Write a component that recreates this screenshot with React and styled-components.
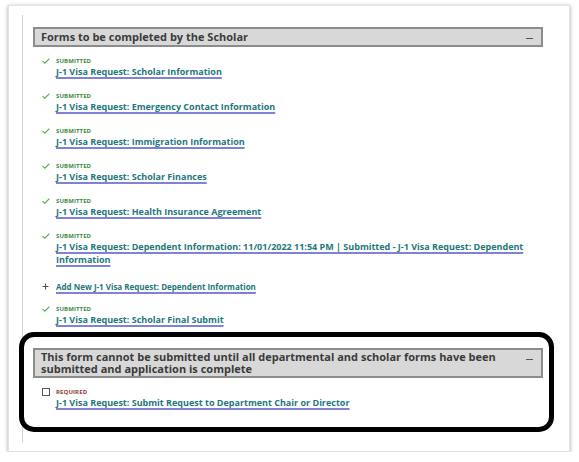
import React from 'react';
import styled, { createGlobalStyle } from 'styled-components';

const GlobalStyle = createGlobalStyle`
  body {
    margin: 0;
    background: #ffffff;
    font-family: "Open Sans", "Noto Sans", sans-serif;
  }
`;

const Card = styled.div`
  box-sizing: border-box;
  width: 562px;
  height: 447px;
  margin: 5px 0 0 8px;
  padding: 9px 0 9px 13px;
  background: #fff;
  border: 1px solid #e2e2e2;
  box-shadow: 0 1px 4px rgba(0, 0, 0, 0.35);
`;

const Inner = styled.div`
  height: 100%;
  box-sizing: border-box;
  border-left: 1px solid #d0d0d0;
  padding: 12px 0 0 10px;
`;

const SectionHeader = styled.div`
  box-sizing: border-box;
  width: 510px;
  min-height: 20px;
  display: flex;
  align-items: flex-start;
  justify-content: space-between;
  padding: 1px 8px 1px 6px;
  background: #d8d8d8;
  border: 2px solid #8c8c8c;
  color: #3b3b3b;
  font-size: 11px;
  font-weight: 700;
  line-height: ${p => (p.$tall ? '12px' : '14px')};
`;

const Collapse = styled.span`
  flex: none;
  width: 7px;
  height: 1px;
  margin-top: 8px;
  margin-left: 12px;
  background: #555;
`;

const List = styled.div`
  padding: 10px 0 0 9px;
`;

const Item = styled.div`
  display: grid;
  grid-template-columns: 14px 1fr;
  align-items: start;
  margin-bottom: ${p => p.$gap ?? 14}px;
`;

const Marker = styled.div`
  display: flex;
  padding-top: ${p => p.$top ?? 1}px;
`;

const Status = styled.div`
  font-size: 6px;
  line-height: 8px;
  font-weight: 700;
  letter-spacing: 0.1px;
  color: ${p => (p.$required ? '#8e3a3a' : '#3e8a3e')};
`;

const LinkLine = styled.div`
  max-width: 480px;
  font-size: ${p => (p.$small ? 8 : 9)}px;
  line-height: 13px;
  font-weight: 700;
`;

const FormLink = styled.a`
  color: #24777c;
  text-decoration: underline;
  text-decoration-color: #8282d2;
  text-decoration-thickness: 1.5px;
  text-underline-offset: 2px;
`;

const Highlight = styled.div`
  box-sizing: border-box;
  width: 535px;
  height: 100px;
  margin: 6px 0 0 -14px;
  padding: 11px 6px 0 9px;
  border: 5px solid #000;
  border-radius: 15px;
`;

const Box = styled.span`
  display: block;
  box-sizing: border-box;
  width: 8px;
  height: 8px;
  border: 1px solid #555;
  background: #fff;
`;

const Check = () => (
  <svg width="8" height="6" viewBox="0 0 8 6">
    <path d="M0.6 3.2 L2.8 5.2 L7.4 0.6" fill="none" stroke="#5aa85a" strokeWidth="1.1" />
  </svg>
);

const Plus = () => (
  <svg width="7" height="7" viewBox="0 0 7 7">
    <path d="M3.5 0.5 V6.5 M0.5 3.5 H6.5" stroke="#555" strokeWidth="1.1" />
  </svg>
);

const scholarForms = [
  'J-1 Visa Request: Scholar Information',
  'J-1 Visa Request: Emergency Contact Information',
  'J-1 Visa Request: Immigration Information',
  'J-1 Visa Request: Scholar Finances',
  'J-1 Visa Request: Health Insurance Agreement',
  'J-1 Visa Request: Dependent Information: 11/01/2022 11:54 PM | Submitted - J-1 Visa Request: Dependent Information',
];

function SubmittedItem({ title, gap }) {
  return (
    <Item $gap={gap}>
      <Marker><Check /></Marker>
      <div>
        <Status>SUBMITTED</Status>
        <LinkLine><FormLink href="#">{title}</FormLink></LinkLine>
      </div>
    </Item>
  );
}

export default function App() {
  return (
    <>
      <GlobalStyle />
      <Card>
        <Inner>
          <SectionHeader>
            <span>Forms to be completed by the Scholar</span>
            <Collapse />
          </SectionHeader>
          <List>
            {scholarForms.map(title => (
              <SubmittedItem key={title} title={title} />
            ))}
            <Item $gap={12}>
              <Marker $top={3}><Plus /></Marker>
              <LinkLine $small><FormLink href="#">Add New J-1 Visa Request: Dependent Information</FormLink></LinkLine>
            </Item>
            <SubmittedItem title="J-1 Visa Request: Scholar Final Submit" gap={0} />
          </List>
          <Highlight>
            <SectionHeader $tall>
              <span>This form cannot be submitted until all departmental and scholar forms have been submitted and application is complete</span>
              <Collapse />
            </SectionHeader>
            <List>
              <Item $gap={0}>
                <Marker $top={0}><Box /></Marker>
                <div>
                  <Status $required>REQUIRED</Status>
                  <LinkLine><FormLink href="#">J-1 Visa Request: Submit Request to Department Chair or Director</FormLink></LinkLine>
                </div>
              </Item>
            </List>
          </Highlight>
        </Inner>
      </Card>
    </>
  );
}
